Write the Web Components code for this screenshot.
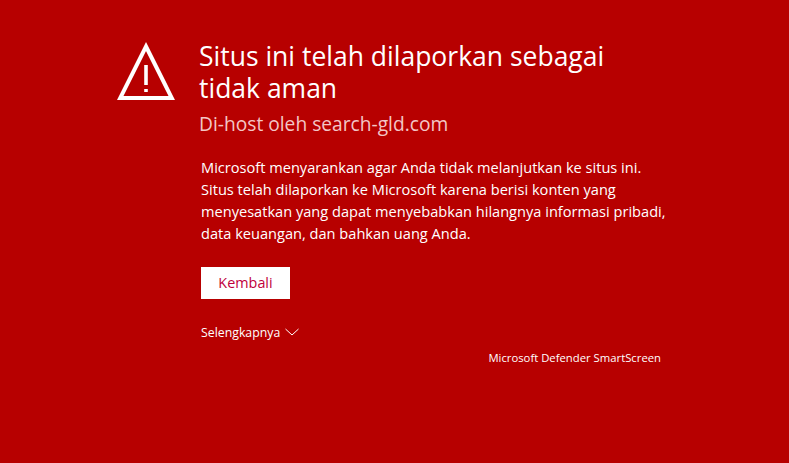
<!DOCTYPE html>
<html lang="id">
<head>
<meta charset="utf-8">
<title>Situs ini telah dilaporkan</title>
<style>
	html, body { margin: 0; height: 100%; background: #b70000; }
	body { font-family: "Open Sans", "Noto Sans", sans-serif; color: #fff; overflow: hidden; }
</style>
</head>
<body>
<smart-screen>
	<warning-head slot="head" host="Di-host oleh search-gld.com">Situs ini telah dilaporkan sebagai tidak aman</warning-head>
	Microsoft menyarankan agar Anda tidak melanjutkan ke situs ini. Situs telah dilaporkan ke Microsoft karena berisi konten yang menyesatkan yang dapat menyebabkan hilangnya informasi pribadi, data keuangan, dan bahkan uang Anda.
	<back-button slot="actions">Kembali</back-button>
	<more-toggle slot="actions">Selengkapnya</more-toggle>
	<span slot="brand">Microsoft Defender SmartScreen</span>
</smart-screen>
<script>
class SmartScreen extends HTMLElement {
	constructor() {
		super();
		this.attachShadow({ mode: 'open' });
		this.shadowRoot.innerHTML = `
			<style>
				:host { display: block; padding: 40px 0 0 117px; }
				#col { width: 544px; }
				#body { margin: 0 0 0 84px; width: 470px; font-size: 14.6px; line-height: 22px; }
				#actions { margin: 23px 0 0 84px; }
				#brand { font-size: 11.3px; line-height: 16px; text-align: right; margin-top: 8px; }
			</style>
			<div id="col">
				<slot name="head"></slot>
				<p id="body"><slot></slot></p>
				<div id="actions"><slot name="actions"></slot></div>
				<div id="brand"><slot name="brand"></slot></div>
			</div>
		`;
	}
}

class WarningHead extends HTMLElement {
	constructor() {
		super();
		this.attachShadow({ mode: 'open' });
		this.shadowRoot.innerHTML = `
			<style>
				:host { display: flex; gap: 24px; margin-bottom: 19px; }
				svg { flex: none; width: 58px; height: 60px; margin-top: 2px; }
				h1 { margin: 0; font-size: 26.5px; line-height: 32px; font-weight: 400; width: 430px; }
				p { margin: 7px 0 0; font-size: 19.2px; line-height: 26px; color: #f3c6c6; }
			</style>
			<svg viewBox="0 0 58 60" fill="none" stroke="#fff">
				<path d="M29 4.5 L54.8 56 H3.2 Z" stroke-width="4"/>
				<path d="M29 23 V43" stroke-width="3.6"/>
				<path d="M29 47 V50" stroke-width="3.6"/>
			</svg>
			<div>
				<h1><slot></slot></h1>
				<p id="host"></p>
			</div>
		`;
		this.shadowRoot.querySelector('#host').textContent = this.getAttribute('host');
	}
}

class BackButton extends HTMLElement {
	constructor() {
		super();
		this.attachShadow({ mode: 'open' });
		this.shadowRoot.innerHTML = `
			<style>
				:host { display: block; width: 89px; height: 32px; background: #fff; color: #c0003c; font-size: 14.4px; line-height: 32px; text-align: center; cursor: pointer; }
			</style>
			<slot></slot>
		`;
	}
}

class MoreToggle extends HTMLElement {
	constructor() {
		super();
		this.attachShadow({ mode: 'open' });
		this.shadowRoot.innerHTML = `
			<style>
				:host { display: flex; align-items: center; gap: 5px; margin-top: 25px; font-size: 12.3px; line-height: 18px; }
				svg { width: 14px; height: 8px; margin-top: -3px; }
			</style>
			<slot></slot>
			<svg viewBox="0 0 14 8" fill="none" stroke="#fff" stroke-width="1"><path d="M.5 1 L7 7 L13.5 1"/></svg>
		`;
	}
}

customElements.define('smart-screen', SmartScreen);
customElements.define('warning-head', WarningHead);
customElements.define('back-button', BackButton);
customElements.define('more-toggle', MoreToggle);
</script>
</body>
</html>
